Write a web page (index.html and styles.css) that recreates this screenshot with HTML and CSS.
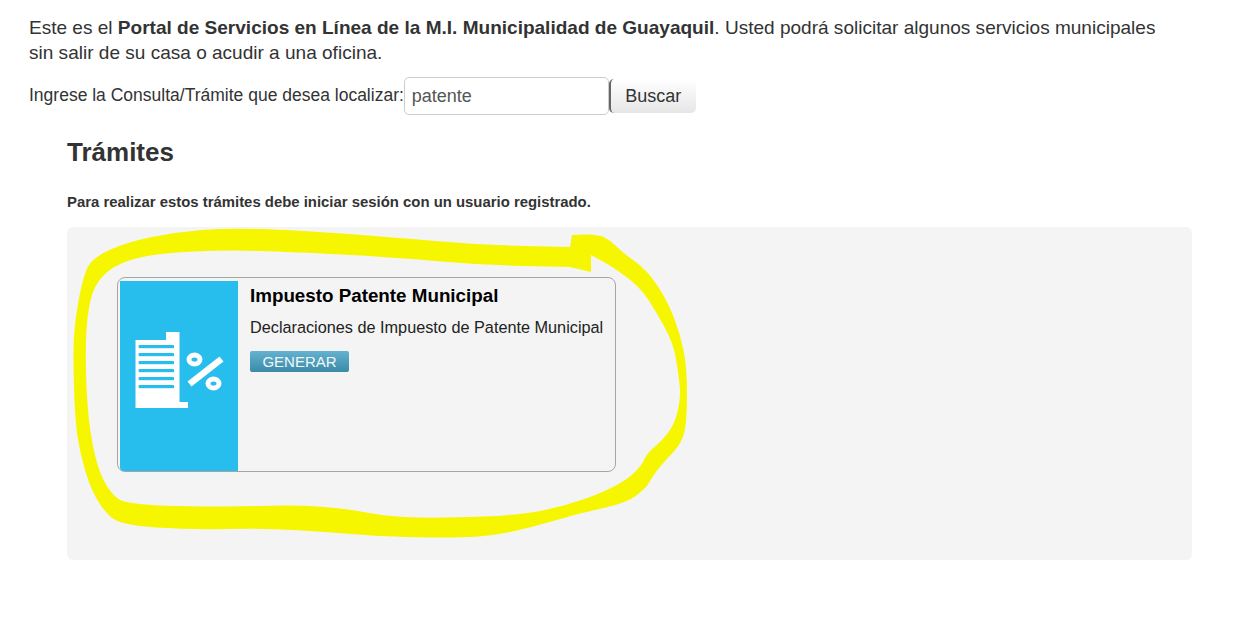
FILE: index.html
```html
<!DOCTYPE html>
<html lang="es">
<head>
<meta charset="UTF-8">
<title>Portal de Servicios en Línea</title>
<link rel="stylesheet" href="styles.css">
</head>
<body>

<div class="intro">
    <p class="intro-text">Este es el <strong>Portal de Servicios en Línea de la M.I. Municipalidad de Guayaquil</strong>. Usted podrá solicitar algunos servicios municipales sin salir de su casa o acudir a una oficina.</p>
    <form class="search">
        <label class="search-label" for="consulta">Ingrese la Consulta/Trámite que desea localizar:</label>
        <input class="search-input" id="consulta" type="text" value="patente">
        <button class="search-btn" type="button">Buscar</button>
    </form>
</div>

<section class="tramites">
    <h2 class="tramites-title">Trámites</h2>
    <p class="tramites-note">Para realizar estos trámites debe iniciar sesión con un usuario registrado.</p>

    <div class="panel">
        <div class="card">
            <div class="card-icon">
                <svg width="118" height="190" viewBox="120 281 118 190">
                    <path fill="#fff" d="M135.500 340H166V332H179.500V402H188V408H135.500Z"/>
                    <g fill="#27bdec">
                        <rect x="138.700" y="345" width="35.300" height="3.200"/>
                        <rect x="138.700" y="353" width="35.300" height="3.200"/>
                        <rect x="138.700" y="361" width="35.300" height="3.200"/>
                        <rect x="138.700" y="369" width="35.300" height="3.200"/>
                        <rect x="138.700" y="377" width="35.300" height="3.200"/>
                        <rect x="138.700" y="385" width="35.300" height="3.200"/>
                    </g>
                    <g fill="none" stroke="#fff">
                        <path stroke-width="6.500" d="M221.500 359L189.500 384"/>
                        <ellipse stroke-width="5" cx="194.500" cy="359.500" rx="5.500" ry="4.500"/>
                        <ellipse stroke-width="5" cx="213.500" cy="383.500" rx="5.500" ry="4.500"/>
                    </g>
                </svg>
            </div>
            <div class="card-body">
                <h3 class="card-title">Impuesto Patente Municipal</h3>
                <p class="card-desc">Declaraciones de Impuesto de Patente Municipal</p>
                <a class="card-btn" href="#">GENERAR</a>
            </div>
        </div>

        <!-- marca amarilla hecha a mano sobre el panel -->
        <svg class="scribble" viewBox="67 227 1125 333">
            <path fill="#f6f600" fill-rule="evenodd" d="M572 235L585 234.500Q597 234 603.500 237Q610 240 616.500 246.500Q623 253 635 261.500Q647 270 657 285Q667 300 673.500 316.500Q680 333 683.500 350Q687 367 687 393.500Q687 420 684.500 431.500Q682 443 672.500 453Q663 463 657.500 470Q652 477 649.500 482Q647 487 637 495Q627 503 603.500 508Q580 513 555 520.500Q530 528 505 533Q480 538 435 537.500Q390 537 358.500 534.500Q327 532 293.500 530Q260 528 226.500 529Q193 530 156.500 527.500Q120 525 111.500 517.500Q103 510 96.500 498.500Q90 487 85 470Q80 453 77.500 436.500Q75 420 74 386.500Q73 353 74 336.500Q75 320 79 298.500Q83 277 87.500 267.500Q92 258 109.500 250Q127 242 152 237Q177 232 202 230Q227 228 260 229Q293 230 341.500 233.500Q390 237 435 241Q480 245 525 246L570 247Z M591 272L591 255L602 261Q613 267 626.500 277Q640 287 648.500 300Q657 313 665 328Q673 343 675.500 356.500Q678 370 679.500 383.500Q681 397 678 410Q675 423 669 431.500Q663 440 655 446.500Q647 453 644.500 459Q642 465 634.500 472.500Q627 480 612 487.500Q597 495 578.500 501Q560 507 540 511Q520 515 483.500 516.500Q447 518 418.500 517.500Q390 517 366.500 512.500Q343 508 318 506.500Q293 505 260 506Q227 507 177 506Q127 505 118.500 499Q110 493 103.500 480Q97 467 92.500 443.500Q88 420 86.500 386.500Q85 353 86.500 330Q88 307 92.500 293.500Q97 280 108.500 271Q120 262 140 257.500Q160 253 193.500 251.500Q227 250 260 251Q293 252 341.500 254.500Q390 257 435 261Q480 265 525 266L570 267Z"/>
        </svg>
    </div>
</section>

</body>
</html>
```

FILE: styles.css
```css
body {
    font-family: "Liberation Sans", Arial, sans-serif;
    margin: 0;
    padding: 0;
    background-color: #fff;
    color: #333;
}

/* cabecera de texto y buscador */
.intro {
    padding: 15px 80px 0 29px;
}

.intro-text {
    margin: 0;
    font-size: 19.050px;
    line-height: 25px;
}

.search {
    display: flex;
    align-items: center;
    margin-top: 12px;
}

.search-label {
    font-size: 17.500px;
    margin-bottom: 2px;
}

.search-input {
    width: 205px;
    height: 38px;
    box-sizing: border-box;
    padding: 0 7px;
    border: 1px solid #ccc;
    border-radius: 5px;
    font-family: inherit;
    font-size: 18px;
    color: #555;
}

.search-btn {
    width: 87px;
    height: 34px;
    padding: 0;
    border: none;
    border-left: 2px solid #666;
    border-radius: 5px;
    background: linear-gradient(#fff, #e6e6e6);
    font-family: inherit;
    font-size: 18px;
    color: #333;
}

/* tramites */
.tramites {
    margin: 0 46px 0 67px;
}

.tramites-title {
    margin: 21px 0 0;
    font-size: 26px;
    line-height: 32px;
}

.tramites-note {
    margin: 25px 0 0;
    font-size: 14.900px;
    line-height: 18px;
    font-weight: bold;
}

.panel {
    position: relative;
    height: 333px;
    margin-top: 16px;
    padding: 50px 0 0 50px;
    box-sizing: border-box;
    background-color: #f4f4f4;
    border-radius: 6px;
}

.scribble {
    position: absolute;
    top: 0;
    left: 0;
    width: 100%;
    height: 100%;
}

.card {
    display: flex;
    width: 499px;
    height: 195px;
    box-sizing: border-box;
    padding: 3px 0 0 2px;
    border: 1px solid #a5a5a5;
    border-radius: 8px;
}

.card-icon {
    width: 118px;
    height: 190px;
    background-color: #27bdec;
    border-radius: 0 0 0 4px;
}

.card-icon svg {
    display: block;
}

.card-body {
    padding-left: 12px;
    color: #000;
}

.card-title {
    margin: 3px 0 0;
    font-size: 18.800px;
    line-height: 24px;
}

.card-desc {
    margin: 9px 0 0;
    font-size: 16.250px;
    line-height: 20px;
    color: #222;
}

.card-btn {
    display: block;
    width: 99px;
    height: 21px;
    margin-top: 14px;
    border-radius: 2px;
    background: linear-gradient(#63b2cf, #3b8aa8);
    font-size: 15px;
    line-height: 21px;
    text-align: center;
    text-decoration: none;
    color: #f2f8fa;
}
```
